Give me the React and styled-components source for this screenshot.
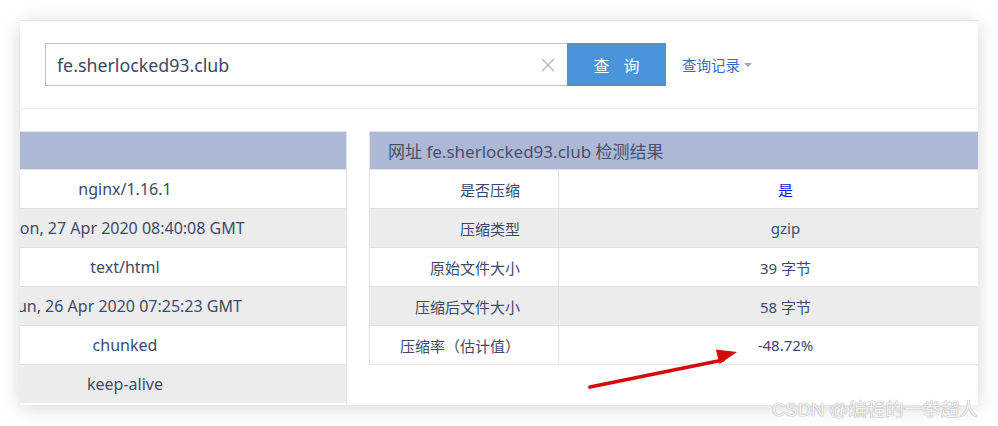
import React from "react";
import styled, { createGlobalStyle } from "styled-components";

const Global = createGlobalStyle`
  html, body { margin: 0; padding: 0; background: #fff; }
  body { font-family: "Noto Sans", "Noto Sans CJK SC", sans-serif; }
  * { box-sizing: border-box; }
`;

const Page = styled.div`
  position: relative;
  width: 998px;
  height: 426px;
  padding: 20px 20px 0 20px;
  overflow: hidden;
`;

const Card = styled.div`
  position: relative;
  width: 958px;
  height: 385px;
  background: #fff;
  box-shadow: 0 3px 18px rgba(0, 0, 0, 0.16);
  border-top: 1px solid #e4e4e4;
  overflow: hidden;
`;

const SearchRow = styled.div`
  display: flex;
  align-items: center;
  padding: 22px 25px 22px 25px;
  border-bottom: 1px solid #ededed;
`;

const InputBox = styled.div`
  display: flex;
  align-items: center;
  width: 522px;
  height: 43px;
  border: 1px solid #b9c1d7;
  border-right: none;
  padding: 0 12px 0 11px;
`;

const InputText = styled.span`
  flex: 1;
  font-size: 17.8px;
  color: #3a4766;
`;

const SearchButton = styled.button`
  width: 99px;
  height: 43px;
  border: none;
  background: #4a94dc;
  color: #fff;
  font-family: "Noto Sans CJK SC", sans-serif;
  font-size: 16px;
  letter-spacing: 14px;
  padding: 0 0 0 14px;
`;

const HistoryLink = styled.div`
  display: flex;
  align-items: center;
  margin-left: 16px;
  color: #2e6fd1;
  font-family: "Noto Sans CJK SC", sans-serif;
  font-size: 14.5px;
  gap: 4px;
`;

const Caret = styled.span`
  width: 0;
  height: 0;
  border-left: 4.5px solid transparent;
  border-right: 4.5px solid transparent;
  border-top: 4px solid #a8a8a8;
`;

const Content = styled.div`
  display: flex;
  align-items: flex-start;
  gap: 22px;
  padding-top: 22px;
`;

const LeftPanel = styled.div`
  width: 327px;
  flex: none;
  height: 300px;
  border-right: 1px solid #e1e1e1;
  overflow: hidden;
`;

const LeftInner = styled.div`
  width: 442px;
  margin-left: -116px;
`;

const Header = styled.div`
  height: 38px;
  background: #adb8d4;
  border-top: 1px solid #e3e3e3;
  display: flex;
  align-items: center;
  padding-left: 18px;
  font-size: 17px;
  color: #46526f;
  white-space: nowrap;
`;

const Row = styled.div`
  display: flex;
  height: 39px;
  background: ${(p) => (p.$alt ? "#ececec" : "#fff")};
  border-top: 1px solid #e2e2e2;
  font-size: ${(p) => p.$size || "15px"};
  color: #3d4a6c;
`;

const Cell = styled.div`
  display: flex;
  align-items: center;
  justify-content: ${(p) => (p.$right ? "flex-end" : "center")};
  padding-right: ${(p) => (p.$right ? "38px" : "0")};
  width: ${(p) => p.$w || "auto"};
  flex: ${(p) => (p.$w ? "none" : "1")};
  border-right: ${(p) => (p.$divider ? "1px solid #e2e2e2" : "none")};
  white-space: nowrap;
  color: ${(p) => p.$color || "inherit"};
`;

const RightTable = styled.div`
  width: 643px;
  flex: none;
  border-left: 1px solid #e2e2e2;
  border-bottom: 1px solid #e2e2e2;
`;

const Arrow = styled.svg`
  position: absolute;
  left: 0;
  top: 0;
  pointer-events: none;
`;

const Watermark = styled.div`
  position: absolute;
  left: 772px;
  top: 395px;
  font-family: "Liberation Sans", "Noto Sans CJK SC", sans-serif;
  font-size: 18.5px;
  color: #f2f2f2;
  text-shadow: 0 0 1px #a8a8a8, 0 0 1px #c0c0c0;
  white-space: nowrap;
`;

const leftRows = [
  "nginx/1.16.1",
  "Mon, 27 Apr 2020 08:40:08 GMT",
  "text/html",
  "Sun, 26 Apr 2020 07:25:23 GMT",
  "chunked",
  "keep-alive",
];

const rightRows = [
  ["是否压缩", "是", "#1515f0"],
  ["压缩类型", "gzip"],
  ["原始文件大小", "39 字节"],
  ["压缩后文件大小", "58 字节"],
  ["压缩率（估计值）", "-48.72%"],
];

export default function App() {
  return (
    <Page>
      <Global />
      <Card>
        <SearchRow>
          <InputBox>
            <InputText>fe.sherlocked93.club</InputText>
            <svg width="14" height="14" viewBox="0 0 14 14">
              <path d="M1 1 L13 13 M13 1 L1 13" stroke="#b4b4b4" strokeWidth="1.3" />
            </svg>
          </InputBox>
          <SearchButton>查询</SearchButton>
          <HistoryLink>
            查询记录
            <Caret />
          </HistoryLink>
        </SearchRow>
        <Content>
          <LeftPanel>
            <LeftInner>
              <Header />
              {leftRows.map((v, i) => (
                <Row key={i} $alt={i % 2 === 1} $size="16px">
                  <Cell>{v}</Cell>
                </Row>
              ))}
            </LeftInner>
          </LeftPanel>
          <RightTable>
            <Header>网址 fe.sherlocked93.club 检测结果</Header>
            {rightRows.map(([k, v, c], i) => (
              <Row key={i} $alt={i % 2 === 1}>
                <Cell $w="189px" $right $divider>{k}</Cell>
                <Cell $color={c}>{v}</Cell>
              </Row>
            ))}
          </RightTable>
        </Content>
        <Arrow width="958" height="385" viewBox="0 0 958 385">
          <line x1="570" y1="366" x2="703" y2="339" stroke="#d40a0a" strokeWidth="3.8" strokeLinecap="round" />
          <polygon points="717,331 695.9,328.4 699.5,343" fill="#d40a0a" />
        </Arrow>
      </Card>
      <Watermark>CSDN @编程的一拳超人</Watermark>
    </Page>
  );
}
